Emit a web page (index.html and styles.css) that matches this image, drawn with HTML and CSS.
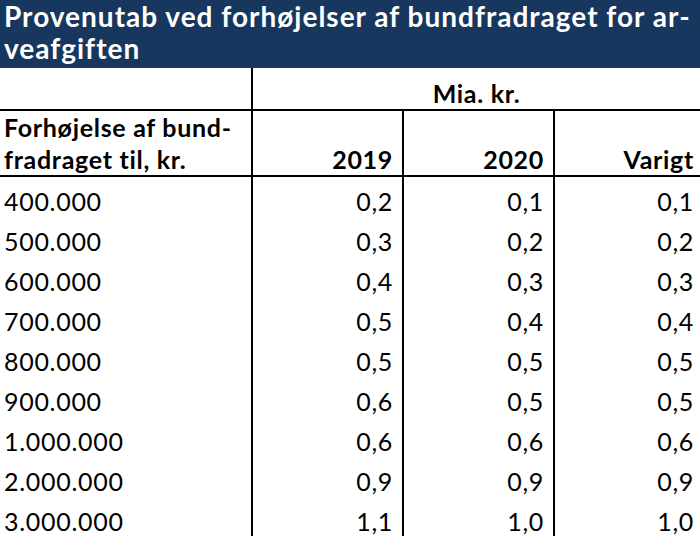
FILE: index.html
```html
<!DOCTYPE html>
<html lang="da">
<head>
<meta charset="utf-8">
<title>Provenutab</title>
<link rel="stylesheet" href="styles.css">
</head>
<body>
<div class="title">Provenutab ved forhøjelser af bundfradraget for ar-<br>veafgiften</div>
<table class="tbl">
  <colgroup>
    <col class="c1"><col class="c2"><col class="c3"><col class="c4">
  </colgroup>
  <thead>
    <tr class="r-unit">
      <th class="first"></th>
      <th colspan="3" class="unit">Mia. kr.</th>
    </tr>
    <tr class="r-head">
      <th class="first lbl">Forhøjelse af bund-<br>fradraget til, kr.</th>
      <th class="num">2019</th>
      <th class="num">2020</th>
      <th class="num last">Varigt</th>
    </tr>
  </thead>
  <tbody>
    <tr><td class="first">400.000</td><td class="num">0,2</td><td class="num">0,1</td><td class="num last">0,1</td></tr>
    <tr><td class="first">500.000</td><td class="num">0,3</td><td class="num">0,2</td><td class="num last">0,2</td></tr>
    <tr><td class="first">600.000</td><td class="num">0,4</td><td class="num">0,3</td><td class="num last">0,3</td></tr>
    <tr><td class="first">700.000</td><td class="num">0,5</td><td class="num">0,4</td><td class="num last">0,4</td></tr>
    <tr><td class="first">800.000</td><td class="num">0,5</td><td class="num">0,5</td><td class="num last">0,5</td></tr>
    <tr><td class="first">900.000</td><td class="num">0,6</td><td class="num">0,5</td><td class="num last">0,5</td></tr>
    <tr><td class="first">1.000.000</td><td class="num">0,6</td><td class="num">0,6</td><td class="num last">0,6</td></tr>
    <tr><td class="first">2.000.000</td><td class="num">0,9</td><td class="num">0,9</td><td class="num last">0,9</td></tr>
    <tr><td class="first">3.000.000</td><td class="num">1,1</td><td class="num">1,0</td><td class="num last">1,0</td></tr>
  </tbody>
</table>
</body>
</html>
```
FILE: styles.css
```css
html, body {
  margin: 0;
  padding: 0;
  background: #ffffff;
}
body {
  font-family: Lato, "Open Sans", "Liberation Sans", sans-serif;
  color: #000000;
  width: 700px;
  overflow: hidden;
}
.title {
  background: #17375e;
  color: #ffffff;
  font-weight: 700;
  font-size: 28px;
  letter-spacing: 1px;
  line-height: 32px;
  height: 68px;
  box-sizing: border-box;
  padding: 0 4px;
  white-space: nowrap;
  overflow: hidden;
}
.tbl {
  width: 700px;
  table-layout: fixed;
  border-collapse: collapse;
  font-size: 25px;
  letter-spacing: 0.7px;
}
.c1 { width: 252px; }
.c2 { width: 151px; }
.c3 { width: 151px; }
.c4 { width: 146px; }
.tbl th, .tbl td {
  padding: 0 9px 0 4px;
  vertical-align: bottom;
  line-height: 32px;
  white-space: nowrap;
}
.tbl th {
  font-weight: 700;
  text-align: left;
}
.first {
  border-right: 2px solid #000;
}
.r-unit th {
  height: 41px;
  border-bottom: 2px solid #000;
}
.unit {
  text-align: center !important;
  padding: 0 !important;
}
.r-head th {
  height: 64px;
  border-bottom: 2px solid #000;
}
.num {
  text-align: right !important;
}
.r-head .num, tbody .num {
  border-right: 2px solid #000;
}
.tbl .last {
  border-right: none;
  padding-right: 6px;
}
tbody td {
  height: 40px;
  padding-bottom: 1px;
}
```
